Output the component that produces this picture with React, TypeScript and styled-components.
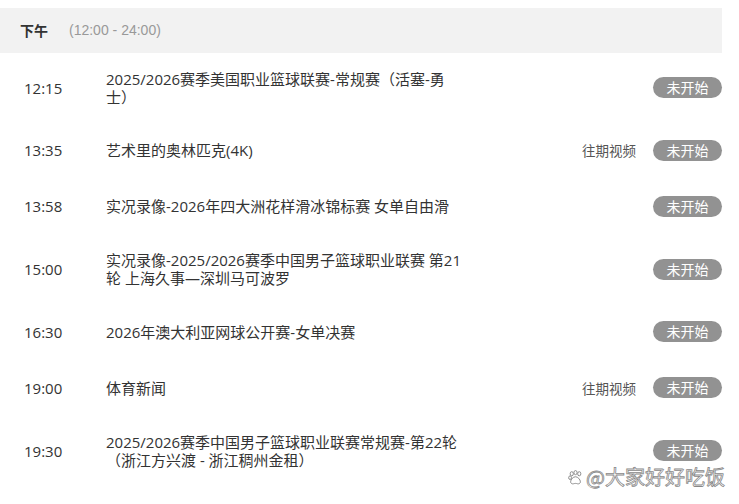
import React from "react";
import styled, { createGlobalStyle } from "styled-components";

const Global = createGlobalStyle`
  html, body { margin: 0; padding: 0; background: #ffffff; }
  body { font-family: "Open Sans", "Noto Sans CJK SC", sans-serif; color: #333; }
`;

const Page = styled.div`
  position: relative;
  width: 739px;
  height: 504px;
  padding-top: 8px;
  box-sizing: border-box;
  overflow: hidden;
`;

const Panel = styled.div`
  width: 722px;
  display: flex;
  flex-direction: column;
`;

const Header = styled.div`
  height: 44.5px;
  background: #f2f2f2;
  display: flex;
  align-items: center;
  padding-left: 20px;
  box-sizing: border-box;
`;

const Period = styled.span`
  font-family: "Noto Sans CJK SC", sans-serif;
  font-size: 14px;
  font-weight: 700;
  color: #333;
  margin-right: 21px;
`;

const Range = styled.span`
  font-family: "Liberation Sans", "Noto Sans CJK SC", sans-serif;
  font-size: 14px;
  color: #999;
`;

const Row = styled.div`
  display: flex;
  align-items: center;
  padding: 17px 0 17px 24px;
`;

const Time = styled.div`
  width: 82px;
  flex: none;
  font-size: 15px;
  line-height: 18px;
  color: #333;
`;

const Title = styled.div`
  flex: 1;
  min-height: 21.75px;
  display: flex;
  flex-direction: column;
  justify-content: center;
  font-size: 15px;
  line-height: 18px;
  color: #333;
`;

const Line = styled.span`
  display: block;
  white-space: nowrap;
`;

const Replay = styled.span`
  font-family: "Noto Sans CJK SC", sans-serif;
  font-size: 13.5px;
  color: #555;
  margin-right: 17px;
  white-space: nowrap;
`;

const Badge = styled.span`
  flex: none;
  width: 69px;
  height: 21px;
  border-radius: 11px;
  background: #929292;
  color: #fff;
  font-family: "Noto Sans CJK SC", sans-serif;
  font-size: 14px;
  line-height: 21px;
  text-align: center;
`;

const Watermark = styled.div`
  position: absolute;
  left: 568px;
  top: 465px;
  display: flex;
  align-items: center;
  gap: 3px;
  font-family: "Noto Sans CJK SC", sans-serif;
  font-size: 20px;
  line-height: 24px;
  color: rgba(255, 255, 255, 0.95);
  -webkit-text-stroke: 0.8px #888;
  white-space: nowrap;
`;

type Item = { time: string; lines: string[]; replay?: boolean };

const items: Item[] = [
  { time: "12:15", lines: ["2025/2026赛季美国职业篮球联赛-常规赛（活塞-勇", "士）"] },
  { time: "13:35", lines: ["艺术里的奥林匹克(4K)"], replay: true },
  { time: "13:58", lines: ["实况录像-2026年四大洲花样滑冰锦标赛 女单自由滑"] },
  { time: "15:00", lines: ["实况录像-2025/2026赛季中国男子篮球职业联赛 第21", "轮 上海久事—深圳马可波罗"] },
  { time: "16:30", lines: ["2026年澳大利亚网球公开赛-女单决赛"] },
  { time: "19:00", lines: ["体育新闻"], replay: true },
  { time: "19:30", lines: ["2025/2026赛季中国男子篮球职业联赛常规赛-第22轮", "（浙江方兴渡 - 浙江稠州金租）"] },
];

const Paw = () => (
  <svg width="15" height="15" viewBox="0 0 16 16" fill="#fff" stroke="#888" strokeWidth="1">
    <ellipse cx="4" cy="4" rx="1.7" ry="2.2" />
    <ellipse cx="8" cy="2.8" rx="1.7" ry="2.2" />
    <ellipse cx="12" cy="4" rx="1.7" ry="2.2" />
    <ellipse cx="2.2" cy="8.2" rx="1.5" ry="1.9" />
    <path d="M8 7.2c2.6 0 5.2 3 5.2 5.4 0 1.8-1.6 2.4-3 2.1-0.9-0.2-1.4-0.4-2.2-0.4s-1.3 0.2-2.2 0.4c-1.4 0.3-3-0.3-3-2.1 0-2.4 2.6-5.4 5.2-5.4z" />
  </svg>
);

export default function App() {
  return (
    <Page>
      <Global />
      <Panel>
        <Header>
          <Period>下午</Period>
          <Range>(12:00 - 24:00)</Range>
        </Header>
        {items.map((it) => (
          <Row key={it.time}>
            <Time>{it.time}</Time>
            <Title>
              {it.lines.map((l, i) => (
                <Line key={i}>{l}</Line>
              ))}
            </Title>
            {it.replay && <Replay>往期视频</Replay>}
            <Badge>未开始</Badge>
          </Row>
        ))}
      </Panel>
      <Watermark>
        <Paw />
        <span>@大家好好吃饭</span>
      </Watermark>
    </Page>
  );
}
